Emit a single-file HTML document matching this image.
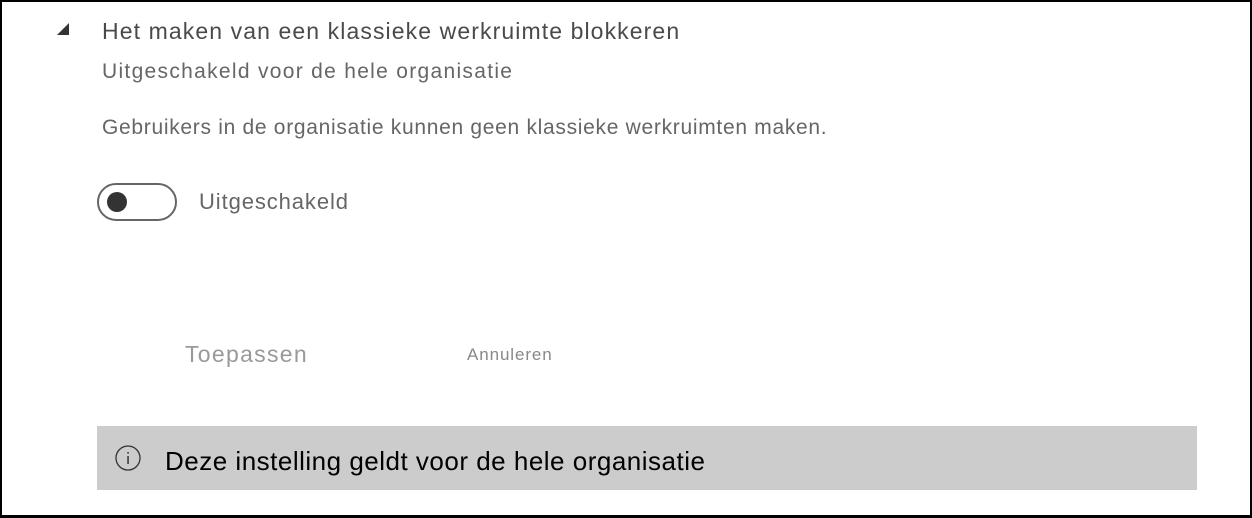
<!DOCTYPE html>
<html><head><meta charset="utf-8"><style>
*{margin:0;padding:0;box-sizing:border-box}
body{width:1252px;height:518px;background:#fff;font-family:"Liberation Sans",Arial,sans-serif;position:relative;overflow:hidden}
.frame{position:absolute;left:0;top:0;width:1252px;height:518px;border:2px solid #000;border-top-width:2px;border-bottom-width:3px}
.t{position:absolute;white-space:nowrap}
</style></head><body>
<div class="frame"></div>
<svg class="t" style="left:56px;top:22px" width="14" height="14"><polygon points="13,1 13,13 1,13" fill="#333"/></svg>
<div class="t" style="left:102px;top:18px;font-size:23px;letter-spacing:1.1px;color:#4a4a4a">Het maken van een klassieke werkruimte blokkeren</div>
<div class="t" style="left:102px;top:60px;font-size:21px;letter-spacing:1.3px;color:#666">Uitgeschakeld voor de hele organisatie</div>
<div class="t" style="left:102px;top:116px;font-size:21px;letter-spacing:0.7px;color:#666">Gebruikers in de organisatie kunnen geen klassieke werkruimten maken.</div>
<div class="t" style="left:97px;top:183px;width:80px;height:38px;border:2px solid #666;border-radius:19px"></div>
<div class="t" style="left:107px;top:192px;width:20px;height:20px;border-radius:50%;background:#333"></div>
<div class="t" style="left:199px;top:189px;font-size:22px;letter-spacing:0.9px;color:#666">Uitgeschakeld</div>
<div class="t" style="left:185px;top:341px;font-size:23px;letter-spacing:1.3px;color:#999">Toepassen</div>
<div class="t" style="left:467px;top:345px;font-size:17px;letter-spacing:0.9px;color:#888">Annuleren</div>
<div class="t" style="left:97px;top:426px;width:1100px;height:64px;background:#cccccc"></div>
<svg class="t" style="left:113px;top:445px" width="30" height="30"><circle cx="15" cy="13" r="12" fill="none" stroke="#333" stroke-width="1.3"/><rect x="14.3" y="11" width="1.5" height="8" fill="#333"/><rect x="14.3" y="7" width="1.5" height="1.6" fill="#333"/></svg>
<div class="t" style="left:165px;top:446px;font-size:26px;letter-spacing:0.5px;color:#000">Deze instelling geldt voor de hele organisatie</div>
</body></html>
